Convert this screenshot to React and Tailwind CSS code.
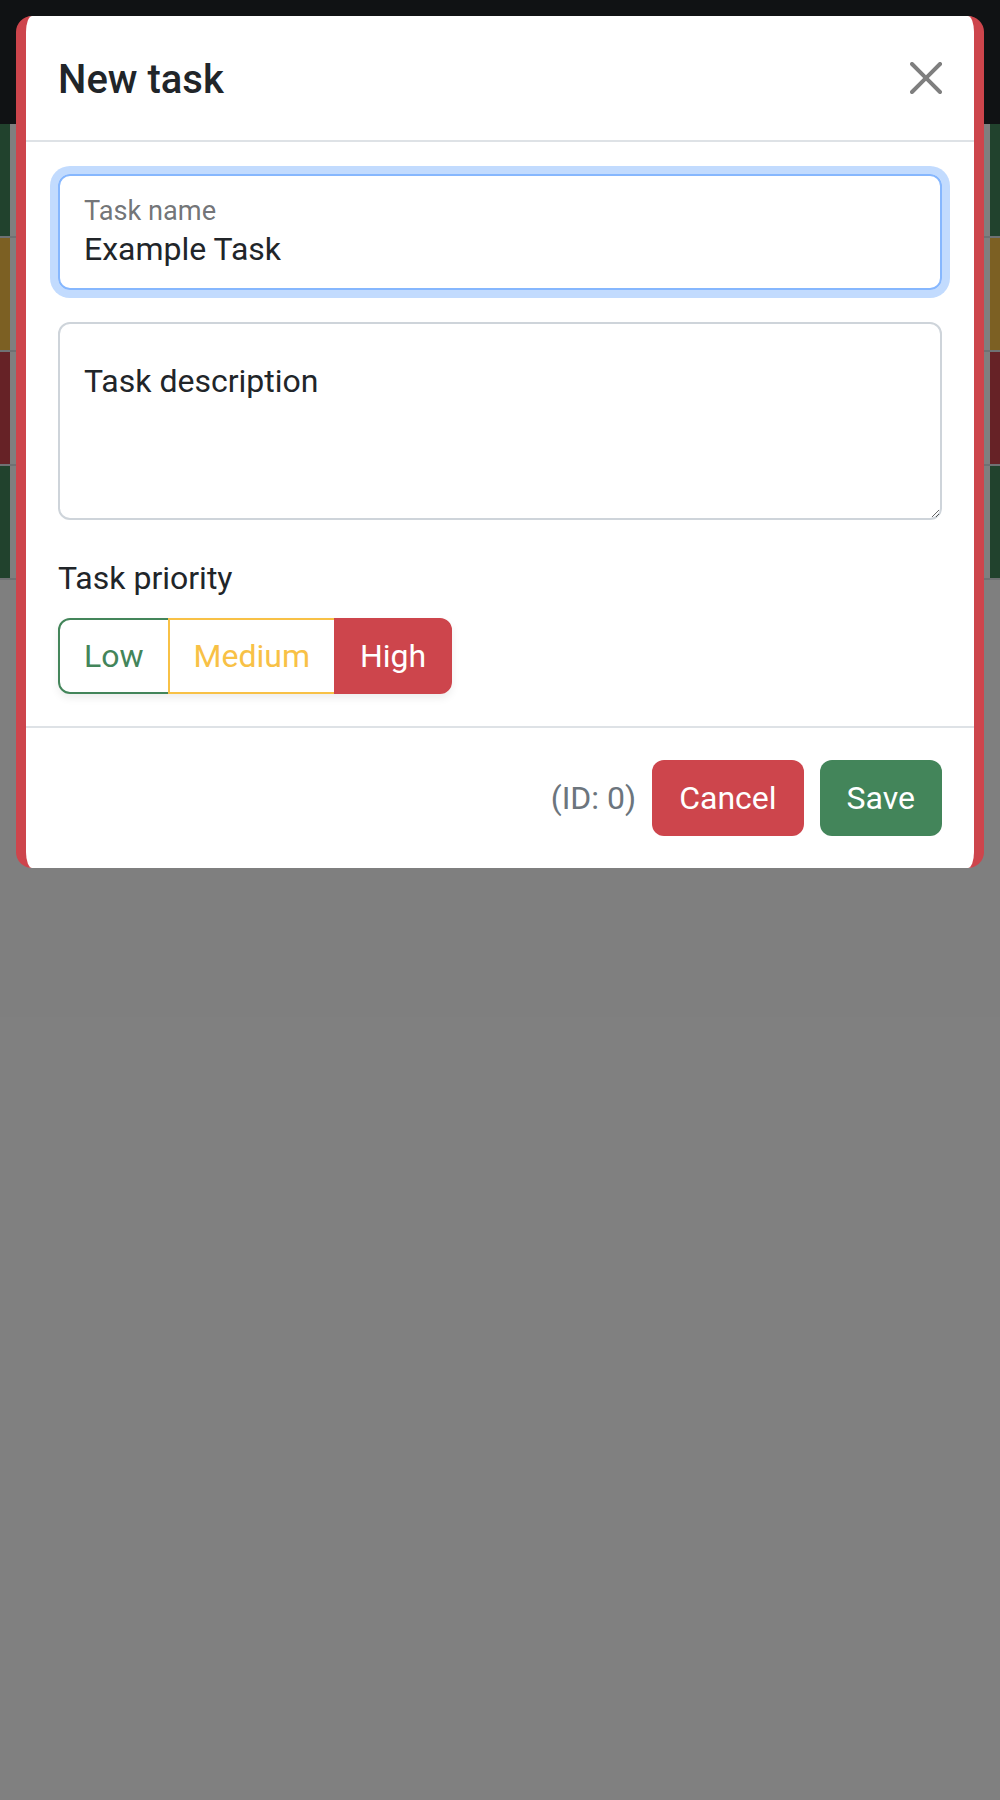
import React from "react";

const rows = [
  "bg-[#43855a]",
  "bg-[#f8c146]",
  "bg-[#cd454c]",
  "bg-[#43855a]",
];

function TaskRow({ color }) {
  return (
    <div className="flex h-[114px] border-b-2 border-[#dee2e6]">
      <div className={`w-[10px] ${color}`} />
      <div className="w-[6px] bg-white" />
      <div className={`flex-1 ${color}`} />
      <div className="w-[6px] bg-white" />
      <div className={`w-[10px] ${color}`} />
    </div>
  );
}

function CloseIcon() {
  return (
    <svg viewBox="0 0 16 16" className="w-[32px] h-[32px]" aria-hidden="true">
      <path
        fill="#000"
        fillOpacity="0.5"
        d="M.293.293a1 1 0 0 1 1.414 0L8 6.586 14.293.293a1 1 0 1 1 1.414 1.414L9.414 8l6.293 6.293a1 1 0 0 1-1.414 1.414L8 9.414l-6.293 6.293a1 1 0 0 1-1.414-1.414L6.586 8 .293 1.707a1 1 0 0 1 0-1.414z"
      />
    </svg>
  );
}

export default function App() {
  return (
    <div className="relative min-h-[1800px] bg-white font-[Roboto,sans-serif] text-[#212529]">
      {/* page behind the dialog */}
      <div className="h-[124px] bg-[#212529]" />
      <div>
        {rows.map((c, i) => (
          <TaskRow key={i} color={c} />
        ))}
      </div>

      {/* backdrop */}
      <div className="absolute inset-0 bg-black/50" />

      {/* dialog */}
      <div className="absolute top-[16px] left-[16px] right-[16px] bg-white rounded-[16px] border-x-[10px] border-[#cd454c] overflow-hidden">
        <div className="flex items-center justify-between p-[32px] border-b-2 border-[#dee2e6]">
          <h5 className="pt-[4px] text-[40px] leading-[56px] font-medium text-[#212529]">New task</h5>
          <button className="flex items-center justify-center">
            <CloseIcon />
          </button>
        </div>

        <div className="p-[32px]">
          <div className="h-[116px] rounded-[12px] border-2 border-[#86b7fe] shadow-[0_0_0_8px_rgba(13,110,253,0.25)] px-[24px] pt-[17px]">
            <div className="text-[27.2px] leading-[36px] text-[rgba(33,37,41,0.65)]">Task name</div>
            <div className="text-[32px] leading-[40px] text-[#212529]">Example Task</div>
          </div>

          <textarea
            readOnly
            defaultValue="Task description"
            className="mt-[32px] block w-full h-[198px] rounded-[12px] border-2 border-[#ced4da] px-[24px] pt-[33px] text-[32px] leading-[48px] text-[#212529] outline-none"
          />

          <div className="mt-[32px] text-[32px] leading-[48px] pt-[2px]">Task priority</div>

          <div className="mt-[16px] inline-flex rounded-[12px] shadow-[0_4px_8px_rgba(0,0,0,0.075)]">
            <button className="h-[76px] px-[24px] border-2 border-[#43855a] rounded-l-[12px] bg-white text-[32px] text-[#43855a]">
              Low
            </button>
            <button className="h-[76px] px-[24px] -ml-[2px] border-2 border-[#f8c146] bg-white text-[32px] text-[#f8c146]">
              Medium
            </button>
            <button className="h-[76px] px-[24px] -ml-[2px] border-2 border-[#cd454c] rounded-r-[12px] bg-[#cd454c] text-[32px] text-white">
              High
            </button>
          </div>
        </div>

        <div className="flex items-center justify-end gap-[16px] p-[32px] border-t-2 border-[#dee2e6]">
          <span className="text-[32px] text-[#6c757d]">(ID: 0)</span>
          <button className="h-[76px] px-[27px] rounded-[12px] bg-[#cd454c] text-[32px] text-white">
            Cancel
          </button>
          <button className="h-[76px] px-[27px] rounded-[12px] bg-[#43855a] text-[32px] text-white">
            Save
          </button>
        </div>
      </div>
    </div>
  );
}
